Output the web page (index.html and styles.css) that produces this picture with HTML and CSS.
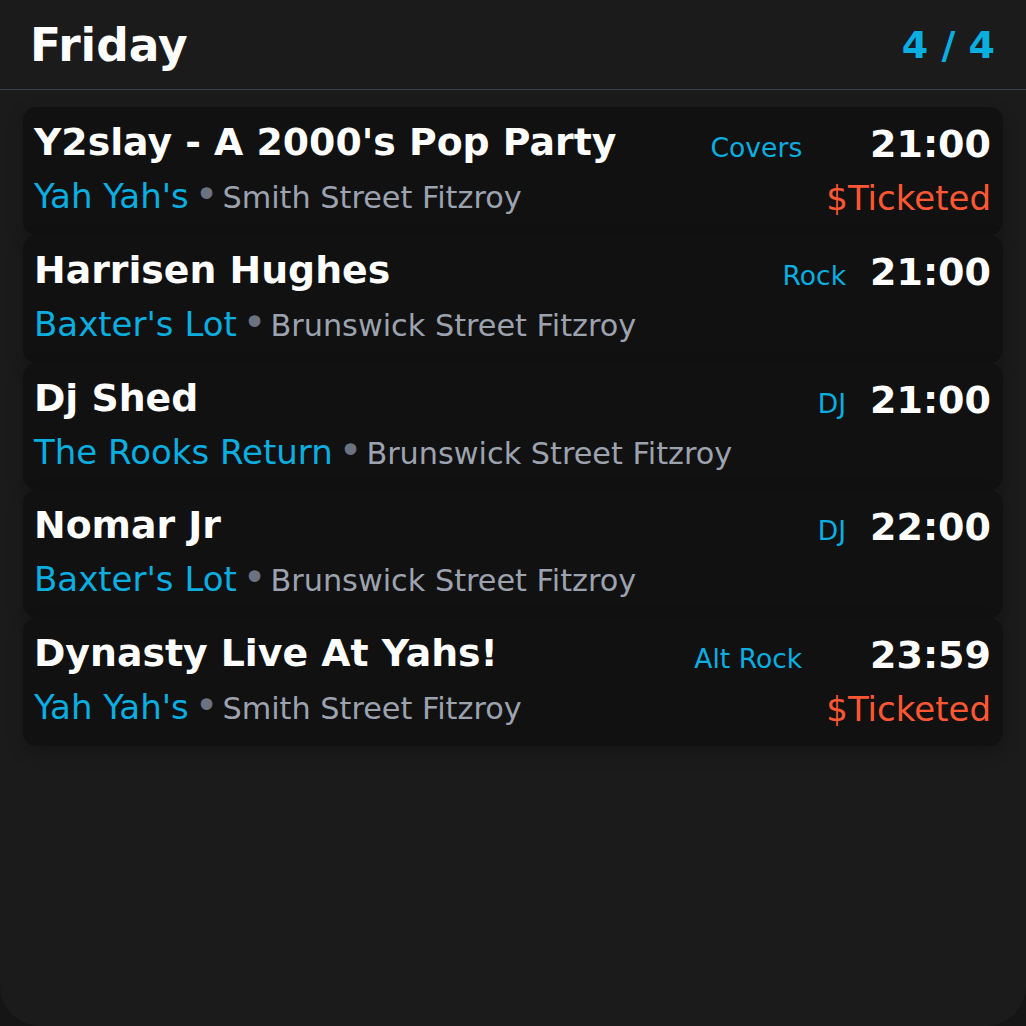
FILE: index.html
```html
<!DOCTYPE html>
<html>
<head>
<meta charset="utf-8">
<link rel="stylesheet" href="styles.css">
</head>
<body>
<div class="panel">
  <header class="header">
    <h1 class="day">Friday</h1>
    <div class="count">4 / 4</div>
  </header>
  <div class="list">
    <div class="card">
      <div class="info">
        <div class="title">Y2slay - A 2000's Pop Party</div>
        <div class="place"><span class="venue">Yah Yah's</span><span class="dot">•</span><span class="street">Smith Street Fitzroy</span></div>
      </div>
      <div class="right">
        <div class="genre">Covers</div>
        <div class="timecol">
          <div class="time">21:00</div>
          <div class="ticket">$Ticketed</div>
        </div>
      </div>
    </div>
    <div class="card">
      <div class="info">
        <div class="title">Harrisen Hughes</div>
        <div class="place"><span class="venue">Baxter's Lot</span><span class="dot">•</span><span class="street">Brunswick Street Fitzroy</span></div>
      </div>
      <div class="right">
        <div class="genre">Rock</div>
        <div class="timecol">
          <div class="time">21:00</div>
        </div>
      </div>
    </div>
    <div class="card">
      <div class="info">
        <div class="title">Dj Shed</div>
        <div class="place"><span class="venue">The Rooks Return</span><span class="dot">•</span><span class="street">Brunswick Street Fitzroy</span></div>
      </div>
      <div class="right">
        <div class="genre">DJ</div>
        <div class="timecol">
          <div class="time">21:00</div>
        </div>
      </div>
    </div>
    <div class="card">
      <div class="info">
        <div class="title">Nomar Jr</div>
        <div class="place"><span class="venue">Baxter's Lot</span><span class="dot">•</span><span class="street">Brunswick Street Fitzroy</span></div>
      </div>
      <div class="right">
        <div class="genre">DJ</div>
        <div class="timecol">
          <div class="time">22:00</div>
        </div>
      </div>
    </div>
    <div class="card">
      <div class="info">
        <div class="title">Dynasty Live At Yahs!</div>
        <div class="place"><span class="venue">Yah Yah's</span><span class="dot">•</span><span class="street">Smith Street Fitzroy</span></div>
      </div>
      <div class="right">
        <div class="genre">Alt Rock</div>
        <div class="timecol">
          <div class="time">23:59</div>
          <div class="ticket">$Ticketed</div>
        </div>
      </div>
    </div>
  </div>
</div>
</body>
</html>
```

FILE: styles.css
```css
html, body {
  margin: 0;
  padding: 0;
  background: #151515;
}
body {
  font-family: "DejaVu Sans", sans-serif;
  width: 1026px;
  height: 1026px;
  overflow: hidden;
}
.panel {
  background: #1b1b1b;
  height: 1026px;
  border-radius: 0 0 40px 40px;
  box-sizing: border-box;
}
.header {
  height: 89px;
  border-bottom: 1px solid #374151;
  display: flex;
  align-items: flex-start;
  justify-content: space-between;
  padding: 0 31px 0 30px;
}
.day {
  margin: 0;
  font-size: 45.5px;
  font-weight: bold;
  color: #ffffff;
  line-height: 52px;
  padding-top: 20px;
}
.count {
  font-size: 38px;
  font-weight: bold;
  color: #0aaee0;
  line-height: 44px;
  padding-top: 23px;
}
.list {
  margin: 17px 23px 0;
  display: flex;
  flex-direction: column;
}
.card {
  background: #111111;
  border-radius: 14px;
  height: 127.75px;
  box-sizing: border-box;
  padding: 11px 12px 0 11px;
  display: flex;
  align-items: flex-start;
  box-shadow: 0 6px 18px rgba(0, 0, 0, 0.22);
}
.info {
  flex: 1;
  min-width: 0;
}
.title {
  font-size: 37.8px;
  font-weight: bold;
  color: #ffffff;
  line-height: 48px;
  white-space: nowrap;
}
.place {
  margin-top: 10px;
  height: 40px;
  line-height: 40px;
  white-space: nowrap;
}
.venue {
  font-size: 34px;
  color: #0aaee0;
}
.street {
  font-size: 30.3px;
  color: #9ca3af;
}
.dot {
  font-size: 40px;
  line-height: 0;
  color: #6b7280;
  margin: 0 4px 0 6px;
}
.right {
  display: flex;
  align-items: baseline;
  gap: 24px;
  margin-top: 2px;
}
.genre {
  font-size: 26.6px;
  color: #0aaee0;
  white-space: nowrap;
}
.timecol {
  display: flex;
  flex-direction: column;
  align-items: flex-end;
}
.time {
  font-size: 38px;
  font-weight: bold;
  color: #ffffff;
  line-height: 48px;
}
.ticket {
  margin-top: 10px;
  font-size: 34px;
  color: #ff5733;
  line-height: 40px;
  white-space: nowrap;
}
```
